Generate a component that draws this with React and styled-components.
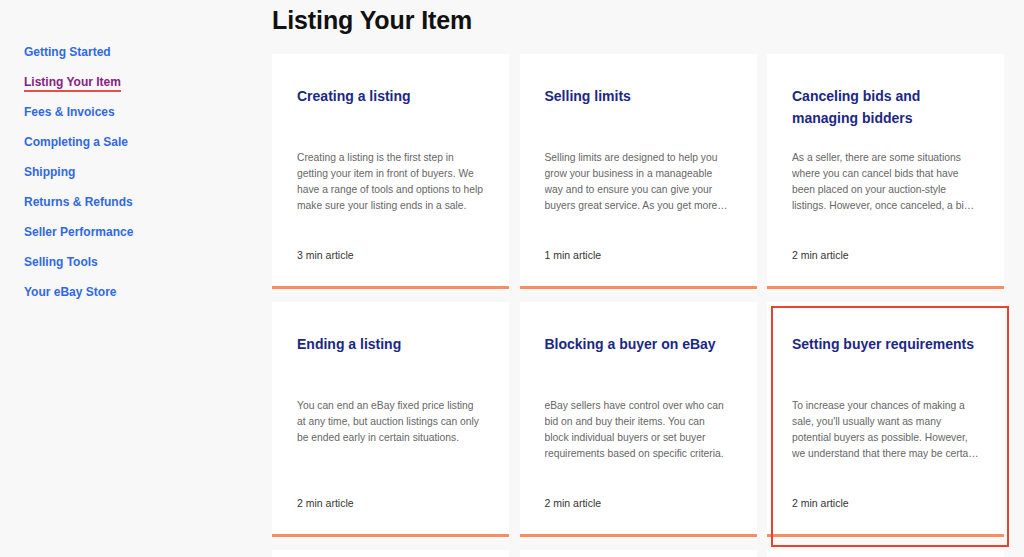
import React from "react";
import styled, { createGlobalStyle } from "styled-components";

const GlobalStyle = createGlobalStyle`
  html, body {
    margin: 0;
    padding: 0;
    background: #f8f8f8;
    font-family: "Liberation Sans", Arial, sans-serif;
    overflow: hidden;
  }
`;

const navItems = [
  "Getting Started",
  "Listing Your Item",
  "Fees & Invoices",
  "Completing a Sale",
  "Shipping",
  "Returns & Refunds",
  "Seller Performance",
  "Selling Tools",
  "Your eBay Store",
];

const articles = [
  {
    title: "Creating a listing",
    text: "Creating a listing is the first step in getting your item in front of buyers. We have a range of tools and options to help make sure your listing ends in a sale.",
    time: "3 min article",
  },
  {
    title: "Selling limits",
    text: "Selling limits are designed to help you grow your business in a manageable way and to ensure you can give your buyers great service. As you get more experience, your limits may increase.",
    time: "1 min article",
  },
  {
    title: "Canceling bids and managing bidders",
    text: "As a seller, there are some situations where you can cancel bids that have been placed on your auction-style listings. However, once canceled, a bid can't be reinstated.",
    time: "2 min article",
  },
  {
    title: "Ending a listing",
    text: "You can end an eBay fixed price listing at any time, but auction listings can only be ended early in certain situations.",
    time: "2 min article",
  },
  {
    title: "Blocking a buyer on eBay",
    text: "eBay sellers have control over who can bid on and buy their items. You can block individual buyers or set buyer requirements based on specific criteria.",
    time: "2 min article",
  },
  {
    title: "Setting buyer requirements",
    text: "To increase your chances of making a sale, you'll usually want as many potential buyers as possible. However, we understand that there may be certain buyers you'd rather not sell to.",
    time: "2 min article",
    highlighted: true,
  },
  { title: "", text: "", time: "" },
  { title: "", text: "", time: "" },
  { title: "", text: "", time: "" },
];

const App = () => {
  return (
    <>
      <GlobalStyle />
      <Page>
        <Sidebar>
          {navItems.map((item) => (
            <NavLink key={item} $active={item === "Listing Your Item"}>
              {item}
            </NavLink>
          ))}
        </Sidebar>
        <Main>
          <PageTitle>Listing Your Item</PageTitle>
          <CardGrid>
            {articles.map((a, i) => (
              <Card key={i} $highlighted={a.highlighted}>
                <CardTitle>{a.title}</CardTitle>
                <CardText>{a.text}</CardText>
                <CardFooter>{a.time}</CardFooter>
              </Card>
            ))}
          </CardGrid>
        </Main>
      </Page>
    </>
  );
};

const Page = styled.div`
  display: flex;
  width: 1024px;
  height: 557px;
  overflow: hidden;
`;

const Sidebar = styled.nav`
  width: 248px;
  padding: 44px 0 0 24px;
  display: flex;
  flex-direction: column;
  align-items: flex-start;
  gap: 14px;
  flex-shrink: 0;
`;

const NavLink = styled.a`
  font-size: 12px;
  font-weight: 700;
  line-height: 16px;
  color: ${(p) => (p.$active ? "#86237f" : "#3168e3")};
  text-decoration: none;
  cursor: pointer;
  border-bottom: ${(p) => (p.$active ? "2px solid #e4514c" : "2px solid transparent")};
  margin-bottom: -2px;
`;

const Main = styled.main`
  display: flex;
  flex-direction: column;
  padding-top: 6px;
`;

const PageTitle = styled.h1`
  margin: 0;
  font-size: 25px;
  font-weight: 700;
  line-height: 28px;
  color: #111;
  letter-spacing: -0.1px;
`;

const CardGrid = styled.div`
  display: grid;
  grid-template-columns: repeat(3, 237px);
  column-gap: 10.5px;
  row-gap: 13px;
  margin-top: 20px;
`;

const Card = styled.div`
  position: relative;
  box-sizing: border-box;
  height: 235px;
  background: #fff;
  border-bottom: 3px solid #f68e62;
  padding: 31px 25px 23px;
  display: flex;
  flex-direction: column;

  ${(p) =>
    p.$highlighted &&
    `
    &::after {
      content: "";
      position: absolute;
      left: 4px;
      top: 4px;
      width: 238px;
      height: 241px;
      box-sizing: border-box;
      border: 2px solid #e8432e;
      pointer-events: none;
    }
  `}
`;

const CardTitle = styled.h3`
  margin: 0;
  min-height: 44px;
  font-size: 14px;
  font-weight: 700;
  line-height: 22px;
  color: #1c2785;
`;

const CardText = styled.p`
  margin: 21px 0 0;
  font-size: 10.3px;
  line-height: 16px;
  color: #666;
  display: -webkit-box;
  -webkit-line-clamp: 4;
  -webkit-box-orient: vertical;
  overflow: hidden;
`;

const CardFooter = styled.div`
  margin-top: auto;
  font-size: 10.5px;
  line-height: 16px;
  color: #333;
`;

export default App;
